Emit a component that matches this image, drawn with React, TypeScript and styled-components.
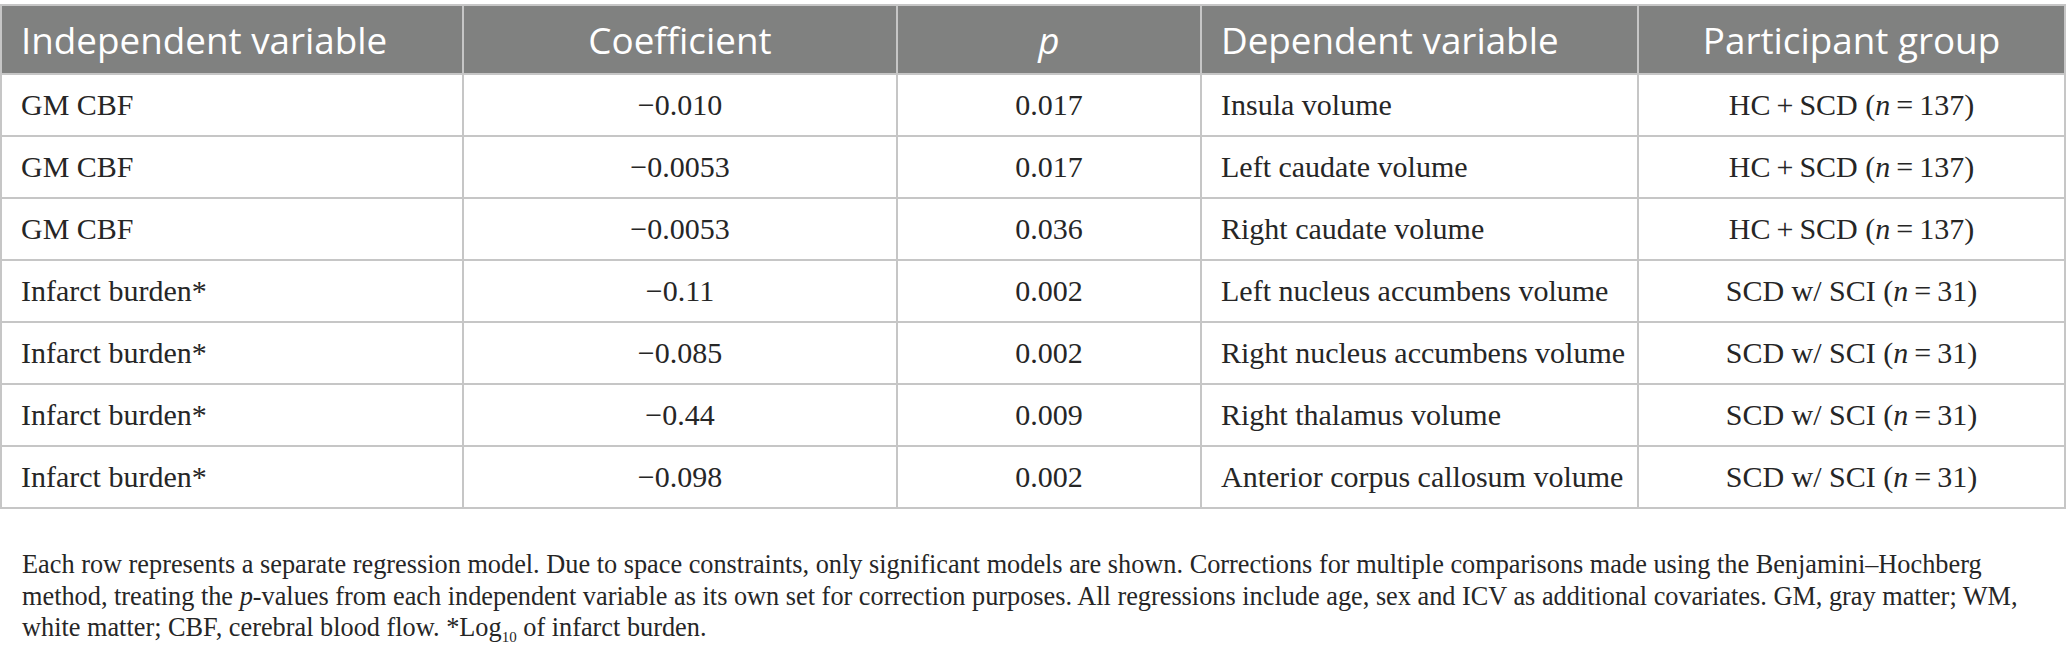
import styled, { createGlobalStyle } from "styled-components";

type Row = {
    indep: string
    coef: string
    p: string
    dep: string
    group: string
    n: number
}

const rows: Row[] = [
    {indep: "GM CBF", coef: "\u22120.010", p: "0.017", dep: "Insula volume", group: "HC\u2009+\u2009SCD", n: 137},
    {indep: "GM CBF", coef: "\u22120.0053", p: "0.017", dep: "Left caudate volume", group: "HC\u2009+\u2009SCD", n: 137},
    {indep: "GM CBF", coef: "\u22120.0053", p: "0.036", dep: "Right caudate volume", group: "HC\u2009+\u2009SCD", n: 137},
    {indep: "Infarct burden*", coef: "\u22120.11", p: "0.002", dep: "Left nucleus accumbens volume", group: "SCD w/ SCI", n: 31},
    {indep: "Infarct burden*", coef: "\u22120.085", p: "0.002", dep: "Right nucleus accumbens volume", group: "SCD w/ SCI", n: 31},
    {indep: "Infarct burden*", coef: "\u22120.44", p: "0.009", dep: "Right thalamus volume", group: "SCD w/ SCI", n: 31},
    {indep: "Infarct burden*", coef: "\u22120.098", p: "0.002", dep: "Anterior corpus callosum volume", group: "SCD w/ SCI", n: 31},
]

const GlobalStyle = createGlobalStyle`
    body {
        margin: 0;
        background: #ffffff;
    }
`

export default function App() {
    return (
        <Page>
            <GlobalStyle/>
            <Table>
                <colgroup>
                    <col style={{width: 462}}/>
                    <col style={{width: 434}}/>
                    <col style={{width: 304}}/>
                    <col style={{width: 437}}/>
                    <col/>
                </colgroup>
                <thead>
                    <tr>
                        <HeadCell>Independent variable</HeadCell>
                        <HeadCell $center>Coefficient</HeadCell>
                        <HeadCell $center><i>p</i></HeadCell>
                        <HeadCell>Dependent variable</HeadCell>
                        <HeadCell $center>Participant group</HeadCell>
                    </tr>
                </thead>
                <tbody>
                    {rows.map((r, i) => (
                        <tr key={i}>
                            <BodyCell>{r.indep}</BodyCell>
                            <BodyCell $center>{r.coef}</BodyCell>
                            <BodyCell $center>{r.p}</BodyCell>
                            <BodyCell>{r.dep}</BodyCell>
                            <BodyCell $center>
                                {r.group} (<i>n</i>{"\u2009=\u2009"}{r.n})
                            </BodyCell>
                        </tr>
                    ))}
                </tbody>
            </Table>
            <Footnote>
                Each row represents a separate regression model. Due to space constraints, only significant models are shown. Corrections for multiple comparisons made using the Benjamini–Hochberg<br/>
                method, treating the <i>p</i>-values from each independent variable as its own set for correction purposes. All regressions include age, sex and ICV as additional covariates. GM, gray matter; WM,<br/>
                white matter; CBF, cerebral blood flow. *Log<Sub>10</Sub> of infarct burden.
            </Footnote>
        </Page>
    )
}

const Page = styled.div`
    width: 2068px;
    padding-top: 4px;
`

const Table = styled.table`
    width: 2066px;
    border-collapse: collapse;
    table-layout: fixed;
    border: 2px solid #c6c6c6;
`

const HeadCell = styled.th<{ $center?: boolean }>`
    height: 67px;
    padding: 0 19px;
    background: #808180;
    color: #ffffff;
    font-family: "Open Sans", "Noto Sans", sans-serif;
    font-weight: 400;
    font-size: 36.8px;
    text-align: ${p => p.$center ? "center" : "left"};
    border-left: 2px solid #c6c6c6;
    vertical-align: middle;
    white-space: nowrap;
`

const BodyCell = styled.td<{ $center?: boolean }>`
    height: 60px;
    padding: 0 19px;
    color: #262626;
    font-family: "Liberation Serif", "Times New Roman", serif;
    font-size: 30px;
    text-align: ${p => p.$center ? "center" : "left"};
    border: 2px solid #c6c6c6;
    white-space: nowrap;
    vertical-align: middle;
`

const Footnote = styled.p`
    margin: 40px 0 0;
    padding: 0 22px;
    color: #262626;
    font-family: "Liberation Serif", "Times New Roman", serif;
    font-size: 26.3px;
    line-height: 31.6px;
    white-space: nowrap;
`

const Sub = styled.sub`
    font-size: 15px;
    line-height: 0;
`
